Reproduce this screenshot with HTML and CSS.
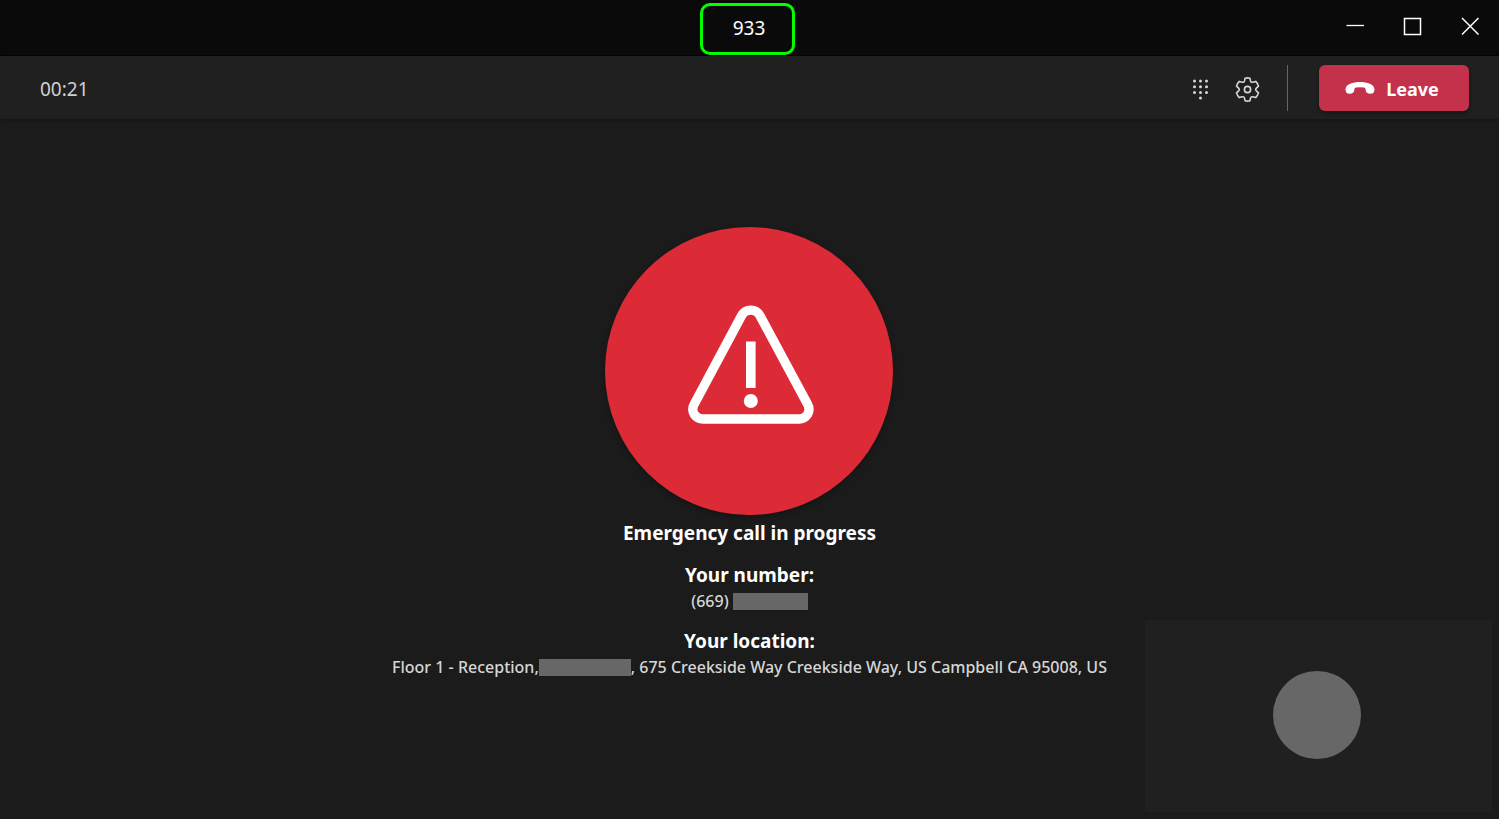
FILE: index.html
```html
<!DOCTYPE html>
<html lang="en">
<head>
<meta charset="utf-8">
<title>933</title>
<link rel="stylesheet" href="styles.css">
</head>
<body>
<div class="window">
  <header class="titlebar">
    <h1 class="title">933</h1>
    <div class="window-controls">
      <button class="window-button" type="button" aria-label="Minimize">
        <svg width="20" height="20" viewBox="0 0 20 20"><path d="M2.500 8.500H20" stroke="#fff" stroke-width="1.300"/></svg>
      </button>
      <button class="window-button" type="button" aria-label="Maximize">
        <svg width="20" height="20" viewBox="0 0 20 20"><rect x="2.500" y="1.500" width="16" height="16" fill="none" stroke="#fff" stroke-width="1.500"/></svg>
      </button>
      <button class="window-button" type="button" aria-label="Close">
        <svg width="20" height="20" viewBox="0 0 20 20"><path d="M2 1L18.500 17.500M18.500 1L2 17.500" stroke="#fff" stroke-width="1.500"/></svg>
      </button>
    </div>
  </header>

  <div class="toolbar">
    <time class="timer">00:21</time>
    <div class="actions">
      <button class="icon-button" type="button" aria-label="Dial pad">
        <svg width="28" height="28" viewBox="0 0 28 28" fill="#d6d6d6">
          <circle cx="7.500" cy="7" r="1.500"/><circle cx="13.500" cy="7" r="1.500"/><circle cx="19.500" cy="7" r="1.500"/>
          <circle cx="7.500" cy="12.700" r="1.500"/><circle cx="13.500" cy="12.700" r="1.500"/><circle cx="19.500" cy="12.700" r="1.500"/>
          <circle cx="7.500" cy="18.400" r="1.500"/><circle cx="13.500" cy="18.400" r="1.500"/><circle cx="19.500" cy="18.400" r="1.500"/>
          <circle cx="13.500" cy="24.100" r="1.500"/>
        </svg>
      </button>
      <button class="icon-button" type="button" aria-label="Settings">
        <svg width="28" height="28" viewBox="0.500 -1.500 28 28" fill="none" stroke="#d6d6d6" stroke-width="1.600" stroke-linejoin="round">
          <path d="M11.600 2.700Q14 2 16.400 2.700L17 5.400Q17.500 7.100 19.300 6.700L22.200 5.900Q24.300 8 25 10.600L22.900 12.600Q21.600 14 22.900 15.400L25 17.400Q24.300 20 22.200 22.100L19.300 21.300Q17.500 20.900 17 22.600L16.400 25.300Q14 26 11.600 25.300L11 22.600Q10.500 20.900 8.700 21.300L5.800 22.100Q3.700 20 3 17.400L5.100 15.400Q6.400 14 5.100 12.600L3 10.600Q3.700 8 5.800 5.900L8.700 6.700Q10.500 7.100 11 5.400Z"/>
          <circle cx="14" cy="14" r="3.100"/>
        </svg>
      </button>
      <span class="divider"></span>
      <button class="leave" type="button">
        <svg width="30" height="14" viewBox="0 0 30 14"><path fill="#fff" d="M15 0C22 0 29.500 2.200 29.500 7.500C29.500 10.400 27.700 12 25.200 11.800C22.500 11.600 20.900 10.500 20.700 8.300C20.600 6.600 20.300 5.900 18.700 5.600Q15 5 11.300 5.600C9.700 5.900 9.400 6.600 9.300 8.300C9.100 10.500 7.500 11.600 4.800 11.800C2.300 12 .5 10.400 .5 7.500C.5 2.200 8 0 15 0Z"/></svg>
        Leave
      </button>
    </div>
  </div>

  <main class="stage">
    <div class="alert">
      <svg width="130" height="136" viewBox="-2 0 130 136">
        <path d="M55.500 12.800Q58.500 7.200 64.800 7.200Q71 7.200 74 12.800L121.500 101Q124.500 106.500 121.500 111.500Q118.500 116 113 116H17Q11.500 116 8.300 111.500Q5.300 106.500 8.300 101Z" fill="none" stroke="#fff" stroke-width="9.300"/>
        <path d="M60 38.500h9.600V85H60Z" fill="#fff"/>
        <circle cx="64.800" cy="98" r="7" fill="#fff"/>
      </svg>
    </div>
    <h2 class="heading">Emergency call in progress</h2>
    <section class="detail">
      <h3 class="heading">Your number:</h3>
      <p class="value">(669) <span class="redacted redacted-number"></span></p>
    </section>
    <section class="detail">
      <h3 class="heading">Your location:</h3>
      <p class="value">Floor 1 - Reception,<span class="redacted redacted-place"></span>, 675 Creekside Way Creekside Way, US Campbell CA 95008, US</p>
    </section>
  </main>

  <aside class="self-view" aria-label="Your video">
    <div class="avatar"></div>
  </aside>
</div>
</body>
</html>
```
FILE: styles.css
```css
* {
  box-sizing: border-box;
}

body {
  margin: 0;
  background: #1b1b1b;
  color: #f2f2f2;
  font-family: "Noto Sans", "Open Sans", sans-serif;
}

h1, h2, h3, p {
  margin: 0;
}

button {
  padding: 0;
  border: 0;
  background: none;
  color: inherit;
  font: inherit;
}

svg {
  display: block;
}

.window {
  position: relative;
  display: flex;
  flex-direction: column;
  min-height: 100vh;
}

.titlebar {
  display: grid;
  grid-template-columns: 1fr auto 1fr;
  align-items: start;
  padding-top: 3px;
  background: #0a0a0a;
  border-bottom: 1px solid #000;
}

.title {
  grid-column: 2;
  padding: 8px 27px 10px 30px;
  margin-right: 4px;
  border: 3px solid #00ff00;
  border-radius: 10px;
  color: #fff;
  font-size: 19px;
  font-weight: 400;
  line-height: 28px;
}

.window-controls {
  display: flex;
  justify-content: flex-end;
}

.window-button {
  display: grid;
  place-items: center;
  width: 58px;
  height: 47px;
}

.toolbar {
  display: flex;
  align-items: center;
  justify-content: space-between;
  padding: 9px 30px 8px 40px;
  background: #202020;
  box-shadow: 0 1px 3px #141414;
}

.timer {
  padding-top: 2px;
  color: #d0d0d0;
  font-size: 19px;
  line-height: 28px;
}

.actions {
  display: flex;
  align-items: center;
}

.icon-button {
  display: grid;
  place-items: center;
  width: 47px;
  height: 46px;
}

.divider {
  width: 1px;
  height: 46px;
  margin: 0 31px 0 16px;
  background: #666;
}

.leave {
  display: flex;
  align-items: center;
  justify-content: center;
  gap: 11px;
  width: 150px;
  height: 46px;
  padding: 2px 4px 0 0;
  border-radius: 6px;
  background: #c4314b;
  box-shadow: 0 2px 4px #141414;
  color: #fff;
  font-size: 18px;
  font-weight: 700;
}

.stage {
  display: flex;
  flex: 1;
  flex-direction: column;
  align-items: center;
  padding: 108px 24px 24px;
  text-align: center;
}

.alert {
  display: grid;
  place-items: center;
  width: 288px;
  height: 288px;
  margin: 0 1px 4px 0;
  border-radius: 50%;
  background: #dc2b36;
  box-shadow: 0 2px 5px #141414;
}

.heading {
  color: #fff;
  font-size: 19px;
  font-weight: 700;
  line-height: 28px;
}

.detail {
  padding-top: 14px;
}

.value {
  color: #d6d6d6;
  font-size: 16px;
  font-weight: 500;
  line-height: 24px;
}

.redacted {
  display: inline-block;
  height: 17px;
  background: #676767;
  vertical-align: -3px;
}

.redacted-number {
  width: 75px;
}

.redacted-place {
  width: 92px;
}

.self-view {
  position: absolute;
  right: 7px;
  bottom: 7px;
  display: grid;
  place-items: center;
  width: 347px;
  height: 192px;
  padding: 0 3px 2px 0;
  background: #202020;
}

.avatar {
  width: 88px;
  height: 88px;
  border-radius: 50%;
  background: #676767;
}
```
